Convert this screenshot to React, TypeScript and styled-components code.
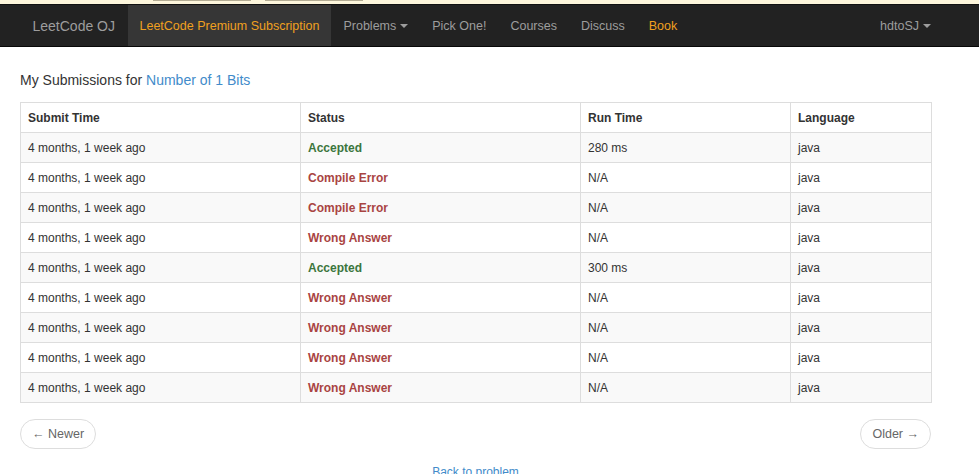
import React from "react";
import styled, { createGlobalStyle } from "styled-components";

const Global = createGlobalStyle`
  html, body { margin: 0; padding: 0; background: #fff; }
  body {
    font-family: "Liberation Sans", Arial, Helvetica, sans-serif;
    color: #333;
    font-size: 12px;
  }
  * { box-sizing: border-box; }
`;

const TopStrip = styled.div`
  height: 5px;
  background: #fdf6dc;
  border-bottom: 1px solid #111;
  display: flex;
  align-items: flex-start;
  padding-left: 153px;
  gap: 14px;
`;

const ChromeTab = styled.div`
  width: 98px;
  height: 1px;
  background: #b4ac94;
`;

const Navbar = styled.nav`
  height: 42px;
  background: #222;
  border-bottom: 1px solid #080808;
`;

const NavInner = styled.div`
  width: 951px;
  height: 100%;
  padding: 0 20px;
  display: flex;
  align-items: stretch;
`;

const Brand = styled.a`
  display: flex;
  align-items: center;
  padding: 0 12.5px;
  font-size: 14px;
  color: #9d9d9d;
  text-decoration: none;
`;

const NavItem = styled.a<{ $active?: boolean; $highlight?: boolean }>`
  display: flex;
  align-items: center;
  padding: 0 12px;
  font-size: 12.5px;
  text-decoration: none;
  color: ${(p) => (p.$active || p.$highlight ? "#f0a020" : "#9d9d9d")};
  background: ${(p) => (p.$active ? "#363636" : "transparent")};
`;

const RightNav = styled.div`
  margin-left: auto;
  margin-right: -12px;
  display: flex;
  align-items: stretch;
`;

const Caret = styled.span`
  display: inline-block;
  width: 0;
  height: 0;
  margin-left: 4px;
  border-top: 4px solid #9d9d9d;
  border-left: 4px solid transparent;
  border-right: 4px solid transparent;
`;

const Main = styled.main`
  width: 951px;
  padding: 0 20px;
`;

const Title = styled.h4`
  margin: 23px 0 12px;
  font-size: 14px;
  font-weight: normal;
  line-height: 20px;
  color: #333;
`;

const Link = styled.a`
  color: #428bca;
  text-decoration: none;
`;

const Table = styled.table`
  width: 911px;
  border-collapse: collapse;
  border: 1px solid #ddd;
  table-layout: fixed;
`;

const Col = styled.col<{ $w: number }>`
  width: ${(p) => p.$w}px;
`;

const Th = styled.th`
  text-align: left;
  font-weight: bold;
  font-size: 12px;
  line-height: 17px;
  padding: 7px 7px 5px;
  border: 1px solid #ddd;
  color: #333;
`;

const Row = styled.tr<{ $striped: boolean }>`
  background: ${(p) => (p.$striped ? "#f9f9f9" : "#fff")};
`;

const Td = styled.td`
  font-size: 12px;
  line-height: 17px;
  padding: 7px 7px 5px;
  border: 1px solid #ddd;
  color: #333;
`;

const Status = styled.span<{ $ok: boolean }>`
  font-weight: bold;
  color: ${(p) => (p.$ok ? "#3c763d" : "#a94442")};
`;

const Pager = styled.div`
  width: 911px;
  margin-top: 16px;
  display: flex;
  justify-content: space-between;
`;

const PagerButton = styled.a`
  display: inline-flex;
  align-items: center;
  height: 30px;
  padding: 0 11px;
  border: 1px solid #ddd;
  border-radius: 15px;
  background: #fff;
  color: #666;
  font-size: 12.5px;
  text-decoration: none;
`;

const BackWrap = styled.div`
  width: 911px;
  margin-top: 15px;
  text-align: center;
  font-size: 12px;
  line-height: 17px;
`;

type Sub = { status: string; run: string };

const rows: Sub[] = [
  { status: "Accepted", run: "280 ms" },
  { status: "Compile Error", run: "N/A" },
  { status: "Compile Error", run: "N/A" },
  { status: "Wrong Answer", run: "N/A" },
  { status: "Accepted", run: "300 ms" },
  { status: "Wrong Answer", run: "N/A" },
  { status: "Wrong Answer", run: "N/A" },
  { status: "Wrong Answer", run: "N/A" },
  { status: "Wrong Answer", run: "N/A" },
];

export default function App() {
  return (
    <>
      <Global />
      <TopStrip>
        <ChromeTab />
        <ChromeTab />
      </TopStrip>
      <Navbar>
        <NavInner>
          <Brand href="#">LeetCode OJ</Brand>
          <NavItem href="#" $active>
            LeetCode Premium Subscription
          </NavItem>
          <NavItem href="#">
            Problems <Caret />
          </NavItem>
          <NavItem href="#">Pick One!</NavItem>
          <NavItem href="#">Courses</NavItem>
          <NavItem href="#">Discuss</NavItem>
          <NavItem href="#" $highlight>
            Book
          </NavItem>
          <RightNav>
            <NavItem href="#">
              hdtoSJ <Caret />
            </NavItem>
          </RightNav>
        </NavInner>
      </Navbar>
      <Main>
        <Title>
          My Submissions for <Link href="#">Number of 1 Bits</Link>
        </Title>
        <Table>
          <colgroup>
            <Col $w={280} />
            <Col $w={280} />
            <Col $w={210} />
            <Col $w={141} />
          </colgroup>
          <thead>
            <tr>
              <Th>Submit Time</Th>
              <Th>Status</Th>
              <Th>Run Time</Th>
              <Th>Language</Th>
            </tr>
          </thead>
          <tbody>
            {rows.map((r, i) => (
              <Row key={i} $striped={i % 2 === 0}>
                <Td>4 months, 1 week ago</Td>
                <Td>
                  <Status $ok={r.status === "Accepted"}>{r.status}</Status>
                </Td>
                <Td>{r.run}</Td>
                <Td>java</Td>
              </Row>
            ))}
          </tbody>
        </Table>
        <Pager>
          <PagerButton href="#">← Newer</PagerButton>
          <PagerButton href="#">Older →</PagerButton>
        </Pager>
        <BackWrap>
          <Link href="#">Back to problem</Link>
        </BackWrap>
      </Main>
    </>
  );
}
